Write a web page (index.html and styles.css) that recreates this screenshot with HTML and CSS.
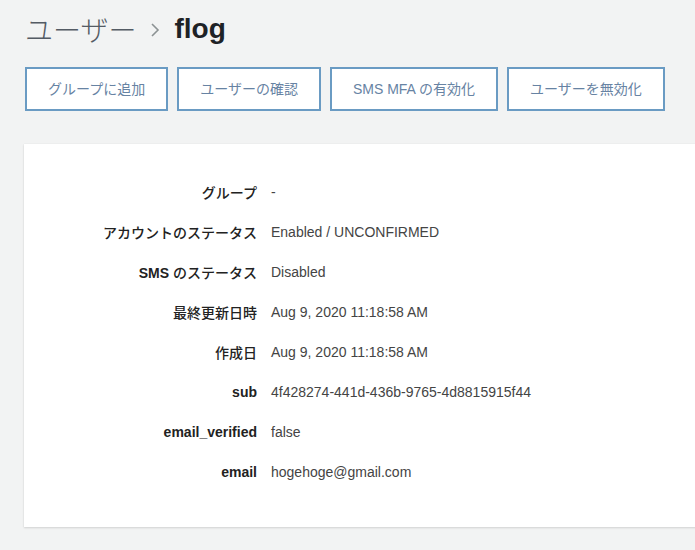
FILE: index.html
```html
<!DOCTYPE html>
<html lang="ja">
<head>
<meta charset="utf-8">
<title>ユーザー - flog</title>
<link rel="stylesheet" href="styles.css">
</head>
<body>
<div class="page">
  <h1 class="title">
    <span class="crumb">ユーザー</span>
    <svg class="chev" width="10" height="16" viewBox="0 0 10 16"><path d="M2 2 L8 8 L2 14" fill="none" stroke="#8c9293" stroke-width="1.6"/></svg>
    <span class="name">flog</span>
  </h1>
  <div class="actions">
    <button class="btn">グループに追加</button>
    <button class="btn">ユーザーの確認</button>
    <button class="btn">SMS MFA の有効化</button>
    <button class="btn">ユーザーを無効化</button>
  </div>
  <div class="card">
    <dl class="details">
      <dt><span class="ja">グループ</span></dt><dd>-</dd>
      <dt><span class="ja">アカウントのステータス</span></dt><dd>Enabled / UNCONFIRMED</dd>
      <dt>SMS <span class="ja">のステータス</span></dt><dd>Disabled</dd>
      <dt><span class="ja">最終更新日時</span></dt><dd>Aug 9, 2020 11:18:58 AM</dd>
      <dt><span class="ja">作成日</span></dt><dd>Aug 9, 2020 11:18:58 AM</dd>
      <dt>sub</dt><dd>4f428274-441d-436b-9765-4d8815915f44</dd>
      <dt>email_verified</dt><dd>false</dd>
      <dt>email</dt><dd>hogehoge@gmail.com</dd>
    </dl>
  </div>
</div>
</body>
</html>
```

FILE: styles.css
```css
html, body {
  margin: 0;
  padding: 0;
  background: #f2f3f3;
  overflow: hidden;
}
body {
  font-family: "Liberation Sans", Arial, "Noto Sans CJK JP", sans-serif;
  color: #333;
  width: 695px;
  height: 550px;
}
.page {
  padding: 12px 0 0 24px;
}
.title {
  margin: 0 0 0 1px;
  height: 34px;
  display: flex;
  align-items: center;
  font-weight: normal;
  font-size: 28px;
  line-height: 34px;
}
.crumb {
  color: #545b64;
  font-family: "Noto Sans CJK JP", sans-serif;
  font-weight: 300;
}
.chev {
  margin: 2px 14px 0 14px;
}
.name {
  font-weight: bold;
  color: #1e2226;
}
.actions {
  display: flex;
  gap: 9px;
  margin-top: 21px;
  margin-left: 1px;
}
.btn {
  height: 44px;
  padding: 0 21px;
  border: 2px solid #6a9bc3;
  background: #fff;
  color: #6783a3;
  font-family: "Liberation Sans", Arial, "Noto Sans CJK JP", sans-serif;
  font-size: 14px;
  line-height: 18px;
  border-radius: 0;
  white-space: nowrap;
}
.card {
  margin-top: 33px;
  width: 720px;
  height: 383px;
  box-sizing: border-box;
  background: #fff;
  box-shadow: 0 1px 2px rgba(0, 0, 0, 0.13), 0 0 1px rgba(0, 0, 0, 0.08);
  padding-top: 28px;
}
.details {
  margin: 0;
  display: grid;
  grid-template-columns: 233px 1fr;
  column-gap: 14px;
  grid-auto-rows: 40px;
  align-items: center;
}
.details dt {
  text-align: right;
  font-weight: bold;
  font-size: 14px;
  color: #222;
  white-space: nowrap;
}
.details dt .ja {
  font-family: "Noto Sans CJK JP", sans-serif;
  font-weight: 500;
}
.details dd {
  margin: 0;
  font-size: 14px;
  color: #444;
}
```
